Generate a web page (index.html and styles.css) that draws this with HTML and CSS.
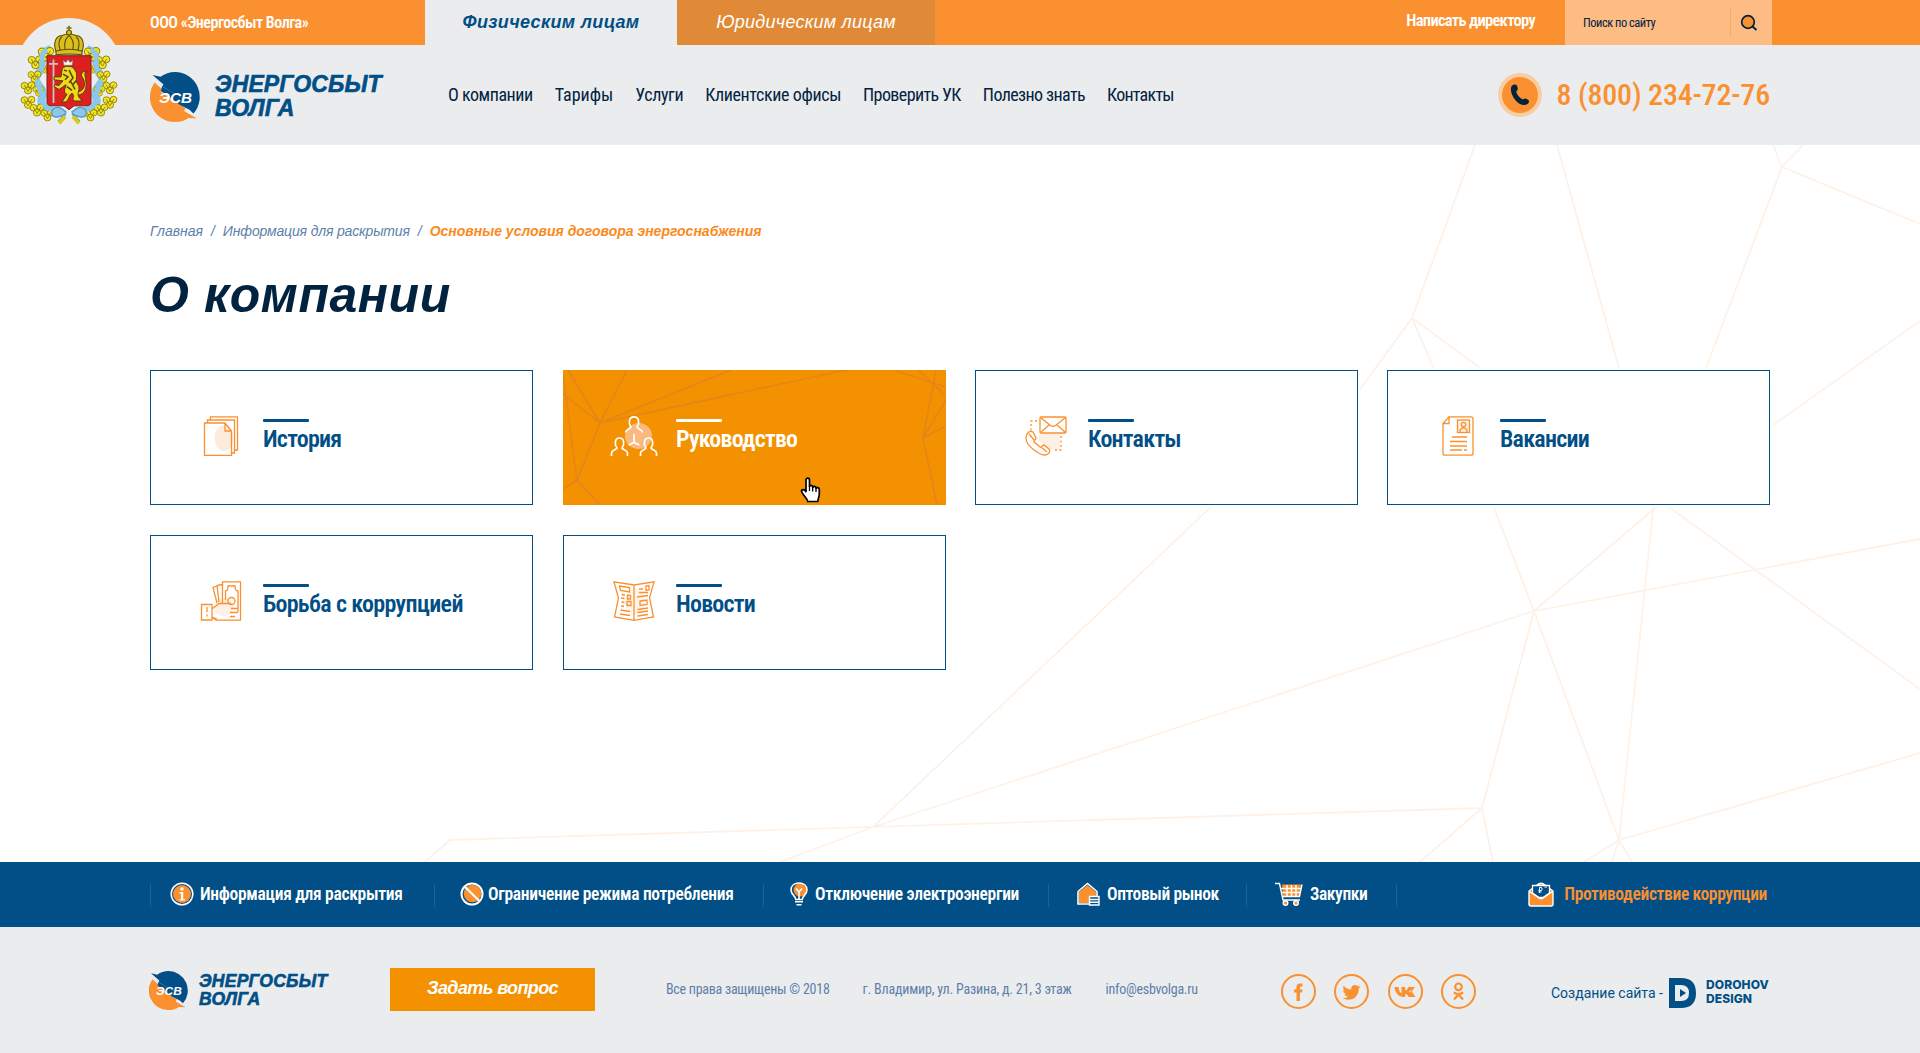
FILE: index.html
```html
<!DOCTYPE html>
<html lang="ru">
<head>
<meta charset="utf-8">
<title>О компании — Энергосбыт Волга</title>
<link rel="stylesheet" href="styles.css">
</head>
<body>
<svg class="defs" aria-hidden="true">
  <symbol id="mark" viewBox="0 0 50 50">
    <path fill="#014f86" d="M2.500 3 10.500 4.800C15 1.500 19.500 0 25 0A25 25 0 0 1 43.500 41.500L30.500 28 32 25.500 12 14.500 13.500 12.500Z"/>
    <path fill="#fa902f" d="M4.500 10.500 12.500 17.500 11 20 35.500 36.500 34 39 47 46.500 38.500 46C34 49 30 50 25 50A25 25 0 0 1 4.500 10.500Z"/>
    <path fill="#014f86" d="M12 14.500 32 25.500 43.500 41.500 40 38 30 33 11 19Z"/>
  </symbol>
  <symbol id="leaf" viewBox="-8 -8 16 16">
    <g fill="#f5e61e" stroke="#8a7d10" stroke-width=".9"><circle cx="-3.500" cy="-2" r="3.400"/><circle cx="3.500" cy="-2.500" r="3.400"/><circle cx="0" cy="3" r="3.600"/></g>
    <path d="M-4-3 0 4M4-3 0 4" stroke="#6d640f" stroke-width=".7"/>
  </symbol>
</svg>

<header class="header">
  <div class="topbar">
    <div class="wrap topbar__in">
      <span class="topbar__company">ООО «Энергосбыт Волга»</span>
      <a class="tab tab--active">Физическим лицам</a>
      <a class="tab">Юридическим лицам</a>
      <a class="topbar__write">Написать директору</a>
      <div class="search">
        <span class="search__text">Поиск по сайту</span>
        <span class="search__btn">
          <svg width="18" height="18" viewBox="0 0 18 18"><circle cx="8" cy="8" r="6.300" fill="#fa902f" stroke="#02233f" stroke-width="1.700"/><path d="M12.500 12.500 16.500 16" stroke="#02233f" stroke-width="1.900"/></svg>
        </span>
      </div>
    </div>
  </div>
  <div class="wrap header__main">
    <a class="logo">
      <svg class="logo__mark" viewBox="0 0 50 50"><use href="#mark"/><text x="9" y="30.500" textLength="33" lengthAdjust="spacingAndGlyphs" class="mark-text">ЭСВ</text></svg>
      <span class="logo__text">ЭНЕРГОСБЫТ<br>ВОЛГА</span>
    </a>
    <nav class="nav">
      <a>О компании</a><a>Тарифы</a><a>Услуги</a><a>Клиентские офисы</a><a>Проверить УК</a><a>Полезно знать</a><a>Контакты</a>
    </nav>
    <div class="phone">
      <span class="phone__icon">
        <svg width="20" height="22" viewBox="0 0 20 22"><path fill="#02233f" d="M2.200 1.400C4 0 6.700.300 7.300 2.200L7.800 4.800C7.900 6 6.500 6.700 6.300 7.500 6.700 10.600 9.600 13.800 12.800 15.300 13.800 15.300 14.800 14.300 16 14.600L18.400 16C19.800 17.400 18.700 19.700 16.600 20.600 13 22 8.200 19.800 5.200 16 1.800 11.800-.900 4.400 2.200 1.400Z"/></svg>
      </span>
      <span class="phone__num">8 (800) 234-72-76</span>
    </div>
  </div>
  <div class="emblem">
    <svg width="106" height="106" viewBox="0 0 106 110" preserveAspectRatio="none">
      <g fill="none" stroke="#8cc7ea" stroke-width="8">
        <path d="M35 28C20 32 30 45 22 54 14 64 30 66 26 78 22 90 34 92 50 96"/>
        <path d="M71 28C86 32 76 45 84 54 92 64 76 66 80 78 84 90 72 92 56 96"/>
      </g>
      <g>
        <use href="#leaf" x="21" y="24" width="18" height="18"/><use href="#leaf" x="11" y="33" width="17" height="17"/><use href="#leaf" x="24" y="43" width="11" height="11"/>
        <use href="#leaf" x="11" y="49" width="15" height="15"/><use href="#leaf" x="4" y="60" width="16" height="16"/><use href="#leaf" x="16" y="65" width="13" height="13"/>
        <use href="#leaf" x="4" y="75" width="16" height="16"/><use href="#leaf" x="13" y="83" width="16" height="16"/><use href="#leaf" x="24" y="89" width="15" height="15"/>
        <use href="#leaf" x="67" y="24" width="18" height="18"/><use href="#leaf" x="78" y="33" width="17" height="17"/><use href="#leaf" x="71" y="43" width="11" height="11"/>
        <use href="#leaf" x="80" y="49" width="15" height="15"/><use href="#leaf" x="86" y="60" width="16" height="16"/><use href="#leaf" x="77" y="65" width="13" height="13"/>
        <use href="#leaf" x="86" y="75" width="16" height="16"/><use href="#leaf" x="77" y="83" width="16" height="16"/><use href="#leaf" x="67" y="89" width="15" height="15"/>
      </g>
      <g fill="none" stroke="#8cc7ea" stroke-width="5">
        <path d="M31 29C22 34 28 42 25 50M22 60C20 66 27 70 26 80 27 88 33 90 40 92"/>
        <path d="M75 29C84 34 78 42 81 50M84 60C86 66 79 70 80 80 79 88 73 90 66 92"/>
      </g>
      <path d="M50 94C42 84 34 90 36 96 38 101 46 98 50 95L42 103M56 94C64 84 72 90 70 96 68 101 60 98 56 95L64 103" fill="#8cc7ea" stroke="#4f95c4" stroke-width="1.200"/>
      <path d="M49 98 43 105M57 98 63 105" stroke="#d9c91b" stroke-width="4"/>
      <path d="M31 35H75V83C75 86 73 87 70 87H58L53 91 48 87H36C33 87 31 86 31 83Z" fill="#dc2020" stroke="#7c1a12"/>
      <path d="M37.500 39V84M33 43.500H42" stroke="#c9c4c4" stroke-width="1.800"/>
      <path d="M47 40 50 42 52 39 54 42 57 40 56 45H48Z" fill="#f4f4f4" stroke="#777" stroke-width=".6"/>
      <g fill="#f0d81d" stroke="#4d430b" stroke-width="1">
        <path d="M60 73C70 72 70 62 66 57 64 53 68 50 71 52 67 51 70 58 70 63 71 72 66 76 61 76Z"/>
        <path d="M46 50C46 45 57 44 59 50 63 56 58 60 62 65 65 70 60 74 63 78L66 82H58C55 79 60 77 56 74 53 75 54 79 50 83H46L51 75C46 73 50 68 50 65L43 70 38 67 39 65 43 66 47 61 38 60 38 57 45 57Z"/>
      </g>
      <path d="M48 50 51 51M47 54 52 57 49 60M53 50 57 58 53 63M55 62 59 70M51 67 56 71M60 61 57 65" stroke="#4d430b" stroke-width="1.500" fill="none"/>
      <g fill="#d9bf1c" stroke="#5b4d0c" stroke-width="1.100">
        <path d="M41 33C36 22 40 14 46 14 50 12 56 12 60 14 66 14 70 22 65 33Z"/>
        <path d="M53 14C47 20 48 28 51 33M53 14C59 20 58 28 55 33M46 15C41 20 43 28 46 33M60 15C65 20 63 28 60 33" fill="none"/>
        <path d="M40 30C48 28 58 28 66 30V34C58 33 48 33 40 34Z"/>
        <circle cx="53" cy="11" r="2.500"/>
      </g>
      <path d="M53 4V9M50.500 6.300H55.500" stroke="#8a7712" stroke-width="1.800"/>
    </svg>
  </div>
</header>

<main class="main">
  <svg class="main__net" width="1920" height="717" viewBox="0 145 1920 717">
    <path d="M1475 145 1412 318 1361 388 1213 505 873 827M1412 318 1493 505 1534 611 1619 840 1653 510M1412 318 1673 510 1920 689M1557 145 1619 368 1653 510M1773 145 1782 167 1803 145M1920 224 1782 167 1706 368 1653 510 1534 611M1920 321 1653 510M873 827 1534 611 1920 539M1534 611 1482 808 450 840 425 862M873 827 780 862M1482 808 1420 862M1482 808 1493 862M1920 753 1619 840 1584 862M1619 840 1612 862M1619 840 1632 862"/>
  </svg>
  <div class="wrap main__in">
    <div class="crumbs"><a>Главная</a><i>/</i><a class="crumbs__long">Информация для раскрытия</a><i>/</i><b>Основные условия договора энергоснабжения</b></div>
    <h1>О компании</h1>
    <div class="cards">
      <a class="card">
        <svg class="card__icon" viewBox="0 0 48 40"><ellipse cx="27" cy="22" rx="9.500" ry="13" fill="#fdebdc"/><path d="M13.500 4V.800H40.500V34H37M10.500 7V4H37.500V37H34.500M7.500 7H28L34.500 15V39.300H7.500ZM28 7V15H34.500"/></svg>
        <span class="card__title">История</span>
      </a>
      <a class="card card--hover">
        <svg class="card__net" width="383" height="135"><path d="M37 53 64 0M37 53 5 0M37 53 168 0M37 53 278 1 300-3M37 53 0 24M37 53 14 110 0 5M0 119 14 110 37 135M333 1 383 17M355 0 383 26M373 0 360 68 374 135M360 68 383 30M360 68 383 56"/></svg>
        <svg class="card__icon" viewBox="0 0 48 40"><ellipse cx="28.500" cy="20" rx="13.500" ry="13" fill="#fab97e"/><path class="w" d="M15.500 16.500C16 13 20 13.500 21 11 18 7 19 .900 24 .900S30 7 27 11C28 13.500 32 13 32.500 16.500M24 18V27M18.500 29 24 26.500 29.500 29M1.500 40V37C2 33.500 5.500 34.500 7 32 4 28 5 22 9.500 22S15 28 12 32C13.500 34.500 17 33.500 17.500 37V40M30.500 40V37C31 33.500 34.500 34.500 36 32 33 28 34 22 38.500 22S44 28 41 32C42.500 34.500 46 33.500 46.500 37V40"/></svg>
        <span class="card__title">Руководство</span>
        <svg class="cursor" width="22" height="26" viewBox="0 0 22 26"><path d="M6 15V3C6 .500 9.500.500 9.500 3V10C9.500 7.800 12.700 7.800 12.700 10V11C12.700 8.800 16 8.800 16 11V12C16 10 19.300 10 19.300 12.500V17C19.300 20 18 21 17.800 24.500H7.800C7.500 21 1.500 17.500 1.500 13.500 3 11.500 5 13 6 15Z" fill="#fff" stroke="#000" stroke-width="1.700"/><path d="M9.500 9V14M12.700 10V14.500M16 11.500V15" stroke="#000" stroke-width="1.300"/></svg>
      </a>
      <a class="card">
        <svg class="card__icon" viewBox="0 0 48 40"><path fill="#fdf0e4" d="M18 18H38V34H28L16 24Z"/><rect x="18" y="1" width="26" height="16" rx="1"/><path d="M18.500 1.500 28.500 9.500Q31 11 33.500 9.500L43.500 1.500M18.500 16.500 27 9M43.500 16.500 35 9"/><path stroke-dasharray="2 2.500" d="M15 5H9V15M39 20V34H33"/><path d="M4 22C4 17 8 14 11 16L14 22C14 24 11 24 12 26L18 31C20 32 20 29 22 29L27 33C29 36 26 39 23 39 19 39.500 4 31 4 22ZM7 18 12 24M19 31 25 36"/></svg>
        <span class="card__title">Контакты</span>
      </a>
      <a class="card">
        <svg class="card__icon" viewBox="0 0 48 40"><path d="M15 .800H37Q39 .800 39 2.800V37.200Q39 39.200 37 39.200H11Q9 39.200 9 37.200V7.500L15 .800V7.500H9.500"/><rect x="23.500" y="4" width="12" height="12.500" fill="#fdf0e4"/><circle cx="29.500" cy="8.500" r="2.200"/><path d="M26 16V14Q29.500 9.500 33 14V16M18 21H33M16 25.500H33M16 30H33M16 34H28M30 34H33"/></svg>
        <span class="card__title">Вакансии</span>
      </a>
      <a class="card">
        <svg class="card__icon" viewBox="0 0 48 40"><ellipse cx="27" cy="26" rx="10" ry="9" fill="#fdf0e4"/><path d="M25.500 22V.800H43.500V39.200H19L16 37M4.500 23.500H15V39H4.500ZM10 26V31M10 33.500V35.500M20 22 16 6.500 21 4.500M22 21 20 4.500 25 3.500M28.500 19V10Q31 10 31 5H38Q38 10 41 10V31M15 28 22 22.500H34M34 27.500H41M33 31.500H41M33 35.500H38M15 36 20 38"/><circle cx="34.500" cy="20" r="3.500"/></svg>
        <span class="card__title card__title--long">Борьба с коррупцией</span>
      </a>
      <a class="card">
        <svg class="card__icon" viewBox="0 0 48 40"><ellipse cx="25" cy="21" rx="10" ry="13" fill="#fef4ea"/><path d="M24 4 4 .800 8.500 17 4.500 36 24 39.300 43.500 36 39.500 17 44 .800ZM24 4V39M9.500 5 19.500 6.500V11L10.500 9.500ZM36 5 39 4.500V9L36 9.500ZM29 8H33M29 11.500H38M11.500 13.500 15 14M17.500 14V18H20.500V14.500ZM11 17 14.500 17.500M11.500 21 14.500 21.500M17 20.500H21V24.500H17ZM27 16 38 14.500M30 20 37 19V23.500L30 24.500ZM11 25 14 25.500M10.500 29 20 30.500M10 33 20 34.500M27.500 28.500 38 27M27.500 31.500 38 30M27.500 35 38 33.500"/></svg>
        <span class="card__title">Новости</span>
      </a>
    </div>
  </div>
</main>

<div class="links">
  <div class="wrap links__in">
    <a class="link"><svg width="24" height="24" viewBox="0 0 24 24"><circle cx="12" cy="12" r="10.800" fill="#014f86" stroke="#fff" stroke-width="1.500"/><circle cx="12" cy="12" r="9" fill="#fa902f"/><circle cx="12" cy="7" r="1.700" fill="#fff"/><path d="M9.500 10H13.200V17.200H15V18.500H9.500V17.200H11V11.500H9.500Z" fill="#fff"/></svg><span>Информация для раскрытия</span></a>
    <a class="link link--limit"><svg width="24" height="24" viewBox="0 0 24 24"><circle cx="12" cy="12" r="10.500" fill="#014f86" stroke="#fff" stroke-width="2"/><circle cx="12.500" cy="11.500" r="8.800" fill="#fa902f"/><path d="M5 5 19.500 19" stroke="#fff" stroke-width="2.200"/></svg><span>Ограничение режима потребления</span></a>
    <a class="link link--bulb"><svg width="18" height="24" viewBox="0 0 18 24"><circle cx="10" cy="8" r="6.500" fill="#fa902f"/><path d="M5.800 17.500C5.800 14 1 13 1 8 1 3.500 4.500 1 9 1S17 3.500 17 8 12.200 14 12.200 17.500Z" fill="none" stroke="#fff" stroke-width="1.600"/><path d="M9 17V9M6 6.500 9 10 12 6.500M5 19.800H13M6.500 22.800H11.500" stroke="#fff" stroke-width="1.600" fill="none"/></svg><span>Отключение электроэнергии</span></a>
    <a class="link link--house"><svg width="23" height="24" viewBox="0 0 23 24"><path d="M2 10 10.500 3 19 10V21H2Z" fill="#fa902f"/><path d="M1 9.500 10.500 1.500 20 9.500V14M1 9.500V22H12" fill="none" stroke="#fff" stroke-width="1.600"/><path d="M12.500 14.500H22V23H12.500ZM12.500 17.500H22M12.500 20.300H22" fill="#014f86" stroke="#fff" stroke-width="1.400"/></svg><span>Оптовый рынок</span></a>
    <a class="link link--cart"><svg width="28" height="24" viewBox="0 0 28 24"><path d="M7 2.500H26L24.500 14H8Z" fill="#fa902f"/><path d="M0 1.500H4.500L8 18H25M5.800 6.500H26.500M6.800 10.500H25.500M7.500 14.500H24.500L27 2.500M12 3V14.500M16.500 3V14.500M21 3V14.500" fill="none" stroke="#fff" stroke-width="1.400"/><circle cx="10.500" cy="21" r="2.300" fill="#fa902f" stroke="#fff" stroke-width="1.400"/><circle cx="21" cy="21" r="2.300" fill="#fa902f" stroke="#fff" stroke-width="1.400"/></svg><span>Закупки</span></a>
    <a class="link link--last"><svg width="26" height="25" viewBox="0 0 26 25"><path d="M1 9V22Q1 24 3 24H23Q25 24 25 22V9L21 6 17 3Q13-.500 9 3L5 6Z" fill="#fa902f" stroke="#fff" stroke-width="1.400"/><path d="M4.500 3.500H21.500V11L15 15.500H11L4.500 11Z" fill="#014f86" stroke="#fff" stroke-width="1.300"/><path d="M1.500 9.500 11 16Q13 17.500 15 16L24.500 9.500" fill="none" stroke="#fff" stroke-width="1.300"/><path d="M11.500 11V5.500H13.500Q15 7 13.500 8.500H10.500M10.500 10H13.500M16.500 5H19" fill="none" stroke="#fff"/></svg><span>Противодействие коррупции</span></a>
  </div>
</div>

<footer class="footer">
  <div class="wrap footer__in">
    <a class="logo logo--small">
      <svg class="logo__mark" viewBox="0 0 50 50"><use href="#mark"/><text x="9" y="30.500" textLength="33" lengthAdjust="spacingAndGlyphs" class="mark-text">ЭСВ</text></svg>
      <span class="logo__text">ЭНЕРГОСБЫТ<br>ВОЛГА</span>
    </a>
    <a class="ask">Задать вопрос</a>
    <div class="info"><span>Все права защищены © 2018</span><span>г. Владимир, ул. Разина, д. 21, 3 этаж</span><span>info@esbvolga.ru</span></div>
    <div class="social">
      <a><svg viewBox="0 0 35 35"><path d="M15.500 27V18.500H13V15.500H15.500V13C15.500 10.500 17 9.500 19 9.500H21.500V12.500H20C19.200 12.500 19 13 19 13.700V15.500H21.500L21.200 18.500H19V27Z"/></svg></a>
      <a><svg viewBox="0 0 35 35"><path d="M26.500 12.700C25.800 13 25.200 13.200 24.400 13.300 25.200 12.800 25.700 12.100 26 11.300 25.300 11.700 24.500 12 23.600 12.200A3.700 3.700 0 0 0 17.300 15.600C14.200 15.400 11.500 14 9.700 11.700 8.700 13.500 9.300 15.600 10.900 16.600 10.300 16.600 9.700 16.500 9.200 16.200 9.200 18 10.500 19.500 12.200 19.900 11.700 20 11.100 20 10.500 19.900 11 21.400 12.400 22.400 14 22.500 12.500 23.700 10.600 24.200 8.600 24 15.500 28.300 24.800 24.400 24.700 14.700 25.400 14.200 26 13.500 26.500 12.700Z"/></svg></a>
      <a><svg viewBox="0 0 35 35"><path d="M15.500 23C11 23 7 19 6.500 13H10.500C10.700 16.500 12 18.500 13.500 19.200V13H17.200V16.500C18.500 16.300 19.700 15 20.500 13H24C23.500 15 22.200 16.700 21 17.600 22.500 18.400 24 20.200 24.700 23H20.700C20 21.300 18.800 20.200 17.200 20V23ZM22.500 13H27L23.700 17.600 27.500 23H23Z"/></svg></a>
      <a><svg viewBox="0 0 35 35" class="line"><circle cx="17.500" cy="12.800" r="3.300"/><path d="M12.800 18.500Q17.500 21.500 22.200 18.500M17.500 20.500 13 25.500M17.500 20.500 22 25.500"/></svg></a>
    </div>
    <div class="dev">
      <span class="dev__by">Создание сайта -</span>
      <svg width="27" height="30" viewBox="0 0 27 30"><path fill="#014f86" fill-rule="evenodd" d="M0 0H12Q27 0 27 15T12 30H0ZM6 7V23H12Q20 23 20 15T12 7ZM11 11 17 15 11 19Z"/></svg>
      <span class="dev__name">DOROHOV<br>DESIGN</span>
    </div>
  </div>
</footer>
</body>
</html>
```
FILE: styles.css
```css
*{box-sizing:border-box}
body{margin:0;width:1920px;height:1053px;display:flex;flex-direction:column;overflow:hidden;background:#fff;color:#02233f;font-family:Roboto,"Liberation Sans",sans-serif;font-stretch:75%}
.defs{position:absolute;width:0;height:0}
.wrap{width:1620px;margin:0 auto}
.mark-text{font:italic bold 14.500px "Liberation Sans",sans-serif;fill:#fff}

.header{position:relative;height:145px;background:#ebecee}
.topbar{height:45px;background:#fa902f}
.topbar__in{display:flex;height:45px;width:1622px;margin-left:150px;align-items:center;color:#fff}
.topbar__company{width:275px;font-size:16px;font-weight:600;letter-spacing:-.5px}
.tab{width:258px;height:45px;text-align:center;background:#e08a38;font:italic 18px/44px "Liberation Sans",sans-serif;letter-spacing:.25px}
.tab--active{width:252px;background:#ebecee;color:#014f86;font-weight:bold;letter-spacing:.35px}
.topbar__write{margin-left:auto;margin-right:30px;font-size:16.500px;font-weight:600;line-height:42px;height:45px;letter-spacing:-.7px}
.search{width:207px;height:45px;padding-left:18px;display:flex;align-items:center;justify-content:space-between;background:#fcbc84;color:#02233f}
.search__text{font-size:12.500px;line-height:43px;letter-spacing:-.5px}
.search__btn{width:42px;height:28px;border-left:1px solid #fba95c;display:flex;align-items:center;padding-left:9px}
.header__main{height:100px;display:flex;align-items:center}
.logo{display:flex;width:298px;align-items:center;gap:15px;color:#014f86}
.logo__mark{width:50px;height:50px;margin-top:3px}
.logo__text{font:italic bold 23px/23.300px "Liberation Sans",sans-serif;-webkit-text-stroke:.6px #014f86;margin-top:3px;letter-spacing:.12px}
.nav{display:flex;gap:22px;margin-top:-2px;font-size:18px;letter-spacing:-.37px}
.nav a:nth-child(1){letter-spacing:-.47px}
.nav a:nth-child(2){letter-spacing:0}
.nav a:nth-child(5),.nav a:nth-child(6){letter-spacing:-.6px}
.nav a:nth-child(7){letter-spacing:-.75px}
.phone{margin-left:auto;display:flex;align-items:center;gap:14.500px;color:#fa902f}
.phone__icon{width:44px;height:44px;border-radius:50%;border:4px solid #f9cda4;background:#fa902f;display:flex;align-items:center;justify-content:center}
.phone__num{margin-top:-2px;font-size:30px;font-weight:500;letter-spacing:-.18px}
.emblem{position:absolute;left:16px;top:18px;width:106px;height:106px;border-radius:50%;background:#ebecee}
.emblem svg{display:block;margin-top:4px}

.main{position:relative;height:717px}
.main__net{position:absolute;left:0;top:0;fill:none;stroke:#fef2e8;stroke-width:1.800}
.main__in{position:relative;padding-top:76px}
.crumbs{display:flex;gap:8px;height:20px;font:italic 14px/20px "Liberation Sans",sans-serif;color:#5d7fab}
.crumbs__long{letter-spacing:-.16px}
.crumbs b{color:#fa8a20}
h1{margin:27px 0 47px;height:55px;font:italic bold 50px/55px "Liberation Sans",sans-serif;letter-spacing:.55px}
.cards{display:grid;grid-template-columns:413px 412px 412px 383px;row-gap:30px}
.card{position:relative;width:383px;height:135px;padding:45px 0 0 46px;display:flex;gap:18px;border:1px solid #014f86;background:#fff;color:#014f86;box-shadow:0 0 3px 2px #fff}
.card__icon{width:48px;height:40px;fill:none;stroke:#fa902f;stroke-width:1.300}
.card__icon [fill]{stroke:none}
.card__icon rect[fill]{stroke:#fa902f}
.card__icon .w{stroke:#fff;stroke-width:1.700}
.card__title{font-size:24px;line-height:28px;font-weight:600;letter-spacing:-.78px}
.card__title--long{letter-spacing:-.64px}
.card__title::before{content:"";display:block;width:46px;height:3px;margin:3px 0;border-radius:1px;background:currentColor}
.card--hover{background:#f39100;border-color:#f39100;color:#fff}
.card__net{position:absolute;left:-1px;top:-1px;fill:none;stroke:#e2861c;stroke-width:1.500}
.card--hover .card__icon,.card--hover .card__title{position:relative}
.cursor{position:absolute;left:236px;top:106px}

.links{height:65px;background:#014f86}
.links__in{display:grid;grid-template-columns:284px 329px 285px 198px 150px 1fr;height:65px;align-items:center}
.link{position:relative;display:flex;align-items:center;gap:7px;padding-left:20px;height:65px;color:#fff;font-size:17.500px;font-weight:600;letter-spacing:-.31px;white-space:nowrap}
.link::before{content:"";position:absolute;left:0;top:22px;width:1px;height:23px;background:#1d6199}
.link span{margin-top:-2px}
.link svg{flex:none;margin-top:-1px}
.link:first-child{gap:6px}
.link--limit{padding-left:26px;gap:4px}
.link--bulb{padding-left:27px}
.link--house{padding-left:29px;letter-spacing:-.42px}
.link--cart{padding-left:29px;letter-spacing:-.42px}
.link--last{justify-content:flex-end;gap:10px;padding-right:3px;color:#fa902f;letter-spacing:-.36px}

.footer{height:126px;background:#ebecee}
.footer__in{display:flex;height:126px}
.logo--small{width:241px;height:40px;margin:43px 0 0 -1px;gap:11px}
.logo--small .logo__mark{width:39px;height:39px;margin:0}
.logo--small .logo__text{font-size:17.500px;line-height:18px;margin:0;letter-spacing:.25px}
.ask{width:205px;height:43px;margin-top:41px;background:#f39100;color:#fff;text-align:center;font:italic bold 18px/41px "Liberation Sans",sans-serif;letter-spacing:-.6px}
.info{display:flex;gap:33px;margin:52px 0 0 71px;color:#5d7fab;font-size:14px;letter-spacing:-.27px;line-height:20px;white-space:nowrap}
.info span:nth-child(2){letter-spacing:-.2px;margin-right:1px}
.social{display:flex;gap:18.300px;margin:47px 0 0 auto}
.social a{width:35px;height:35px;border:2px solid #fa902f;border-radius:50%}
.social svg{display:block;width:35px;height:35px;margin:-2px;fill:#fa902f}
.social .line{fill:none;stroke:#fa902f;stroke-width:2.200}
.dev{display:flex;width:219px;height:30px;margin:51px 0 0 75px;align-items:center;color:#014f86;white-space:nowrap}
.dev__by{width:118px;font-size:14px;font-stretch:100%}
.dev__name{margin:-2px 0 0 10px;font:800 12px/14px Inter,sans-serif;letter-spacing:.1px}
```
